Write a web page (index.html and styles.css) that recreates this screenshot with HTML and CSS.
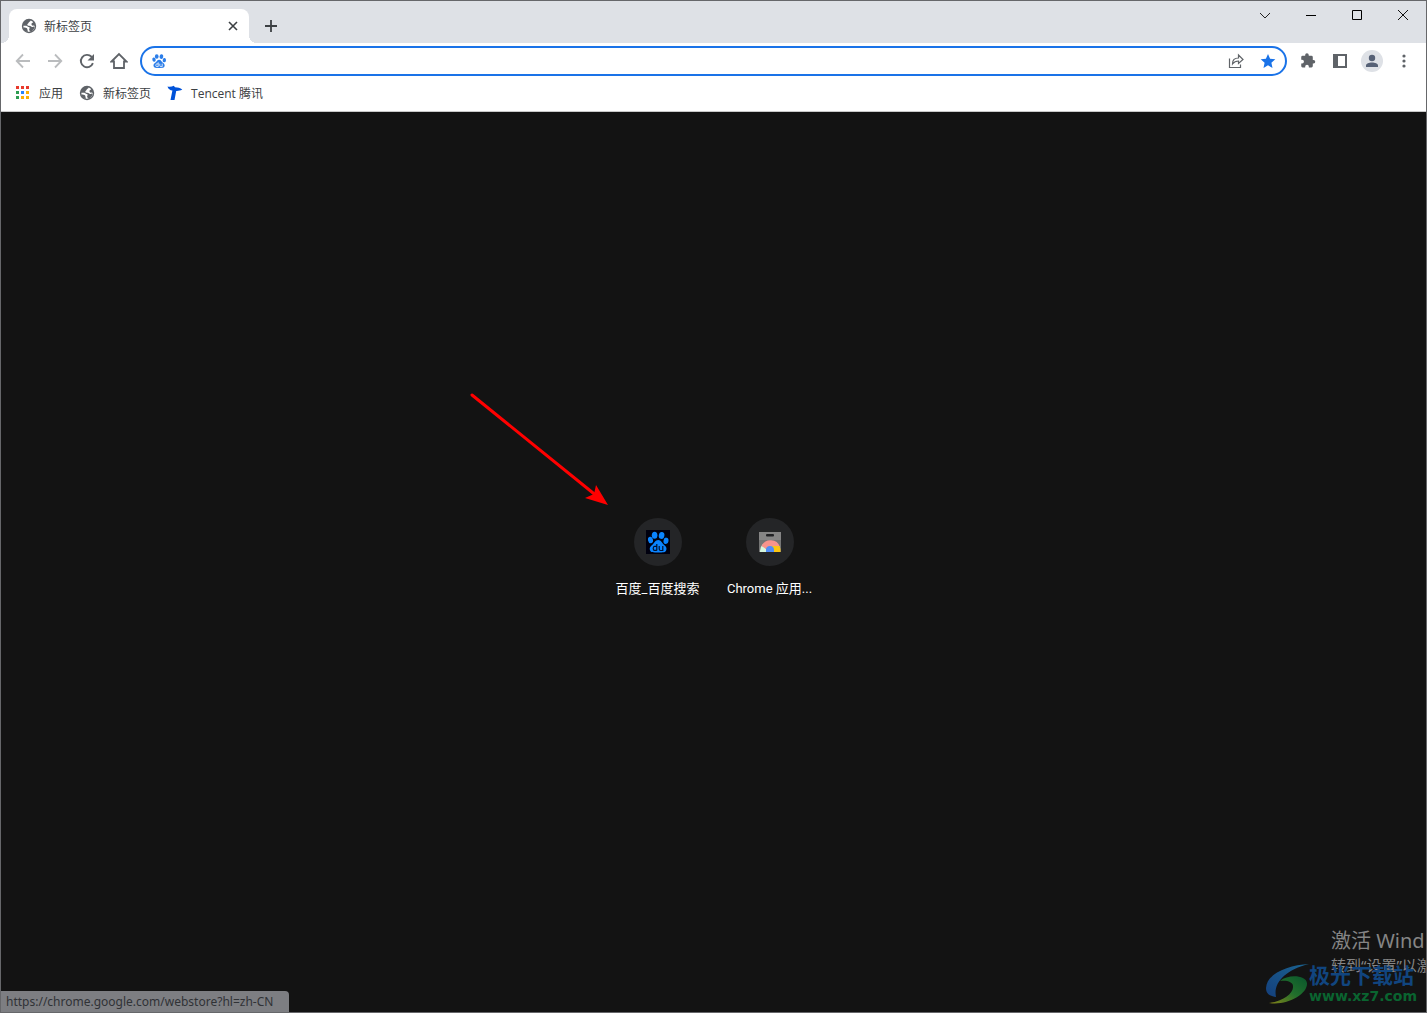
FILE: index.html
```html
<!DOCTYPE html>
<html lang="zh-CN">
<head>
<meta charset="utf-8">
<title>新标签页</title>
<link rel="stylesheet" href="styles.css">
</head>
<body>
<svg class="defs" aria-hidden="true">
  <symbol id="globe" viewBox="0 0 16 16">
    <circle cx="8" cy="8" r="7.200" fill="#5f6368"/>
    <path d="M9.800 2.500c-.6 1.300-2 1.300-2.200 2.300-.2.900-1.300 1-1.300 1.900 0 .8.800 1.100 2 1.100 1.400 0 1.700 1.200 2.900 1.200 1 0 1.300-.8 2.300-.8.200 2.600-1.900 5.200-5 5.500.1-1.100.1-1.700-.5-2.100.1-.9.800-1.100.6-1.900-.3-1-1.500-.6-2.300-1.400C5.500 7.500 4.300 7.800 2.400 7.700c-.2 3.200 2.200 5 4 5.700l2 .5c3 0 5.600-2.600 5.500-5.800-.7-.8-1.700-.9-2.400-.4-.7-.8-1.400-1.500-.9-2.300.6-.7 1.400-.6 1.600-1.400z" fill="#fff"/>
    <path d="M2.400 9.200c1.500.4 3.200.2 3.700 1.300.5.900.3 2.200 1 3.300-2.700-.2-4.800-2.300-4.700-4.600z" fill="#5f6368"/>
  </symbol>
  <symbol id="paw" viewBox="0 0 24 24">
    <ellipse cx="8.600" cy="5.300" rx="2.800" ry="3.500"/>
    <ellipse cx="15.600" cy="5.400" rx="2.800" ry="3.500" transform="rotate(10 15.600 5.400)"/>
    <ellipse cx="4.500" cy="10" rx="2.500" ry="3.200" transform="rotate(-12 4.500 10)"/>
    <ellipse cx="20" cy="10.800" rx="2.500" ry="3.200" transform="rotate(8 20 10.800)"/>
    <path d="M12.200 10c3 0 3.700 3 5.700 4.700 2.300 1.900 3 3 2.400 5.200-.7 2.500-3 2.500-8.100 2.500s-7.600 0-8.300-2.500c-.6-2.200.3-3.500 2.500-5.200 2-1.700 2.800-4.700 5.800-4.700Z"/>
    <path d="M10.800 14v6.500M10.800 16.400H8.600q-1.400 0-1.400 2t1.400 2h2.200M13.200 16v3q0 1.500 1.400 1.500h2.200V16" fill="none" stroke="var(--paw-mark)" stroke-width="1.200"/>
  </symbol>
</svg>
<div class="window">
  <header class="tabstrip">
    <div class="tab">
      <svg class="i16"><use href="#globe"/></svg>
      <span class="tab-title">新标签页</span>
      <button class="tab-close" aria-label="关闭标签页"><svg class="i16" viewBox="0 0 16 16"><path d="M4 4l8 8M12 4l-8 8" stroke="#3c4043" stroke-width="1.600"/></svg></button>
    </div>
    <button class="new-tab" aria-label="新标签页"><svg class="i16" viewBox="0 0 16 16"><path d="M8 2v12M2 8h12" stroke="#3c4043" stroke-width="1.800"/></svg></button>
    <div class="caption">
      <button aria-label="搜索标签页"><svg class="i16" viewBox="0 0 16 16"><path d="M3 6l5 5 5-5" stroke="#222"/></svg></button>
      <button aria-label="最小化"><svg class="i16" viewBox="0 0 16 16"><path d="M3 8.500h10" stroke="#000"/></svg></button>
      <button aria-label="最大化"><svg class="i16" viewBox="0 0 16 16"><path d="M3.500 3.500h9v9h-9z" stroke="#000"/></svg></button>
      <button aria-label="关闭"><svg class="i16" viewBox="0 0 16 16"><path d="M3 3l10 10M13 3L3 13" stroke="#111"/></svg></button>
    </div>
  </header>
  <nav class="toolbar">
    <button aria-label="后退"><svg class="i16" viewBox="0 0 16 16"><path d="M15 8H2M8 1.500L1.700 8 8 14.500" stroke="#babcbe" stroke-width="1.800"/></svg></button>
    <button aria-label="前进"><svg class="i16" viewBox="0 0 16 16"><path d="M1 8h13M8 1.500L14.300 8 8 14.500" stroke="#babcbe" stroke-width="1.800"/></svg></button>
    <button aria-label="重新加载"><svg class="i16" viewBox="0 0 16 16"><path d="M13.900 10.200A6.200 6.200 0 1 1 12.500 3.700L14 5.400" stroke="#5f6368" stroke-width="1.900"/><path d="M15 1v6.500H8.500z" fill="#5f6368"/></svg></button>
    <button aria-label="主页"><svg class="i18" viewBox="0 0 18 18"><path d="M1.500 9.500L9 2l7.500 7.500H14V16H4V9.500z" stroke="#5f6368" stroke-width="1.800"/></svg></button>
    <div class="omnibox">
      <svg class="i16 paw-blue"><use href="#paw"/></svg>
      <input type="text" aria-label="地址栏">
      <button aria-label="分享"><svg class="i16" viewBox="0 0 16 16"><path d="M1.500 5.500v9h11v-3M4.500 11c0-4 2-6 6-6V2l4.500 4.500-4.500 4V8c-3 0-4.500 1-6 3z" stroke="#606468" stroke-width="1.200"/></svg></button>
      <button aria-label="书签"><svg class="i16" viewBox="0 0 16 16"><path d="M8 1l2.100 4.800 5.200.5-3.900 3.500 1.100 5.200L8 12.300 3.500 15l1.100-5.200L.7 6.300l5.200-.5z" fill="#1a73e8"/></svg></button>
    </div>
    <button aria-label="扩展程序"><svg class="i16" viewBox="-1 0 26 26"><path d="M21 11.500h-1.200V6.800a2.200 2.200 0 0 0-2.200-2.200h-4.400V3.400a2.900 2.900 0 0 0-5.800 0v1.200H3.200A2.200 2.200 0 0 0 1 6.800V11h1.400a3 3 0 0 1 0 6H1v4.300a2.200 2.200 0 0 0 2.200 2.200h4.200v-1.300a3 3 0 0 1 6 0v1.300h4.200a2.200 2.200 0 0 0 2.200-2.200v-4.200H21a2.800 2.800 0 0 0 0-5.600z" fill="#5f6368"/></svg></button>
    <button aria-label="侧边栏"><svg class="i16" viewBox="0 0 16 16"><path fill-rule="evenodd" d="M1 1h14v14H1zM6 3v10h7V3z" fill="#5f6368"/></svg></button>
    <button class="profile" aria-label="个人资料"><svg class="i16" viewBox="0 0 16 16"><circle cx="8" cy="5" r="3.200" fill="#566176"/><path d="M2 14v-1.500C2 10.500 5 9.500 8 9.500s6 1 6 3V14z" fill="#566176"/></svg></button>
    <button aria-label="更多"><svg class="i16" viewBox="0 0 16 16"><g fill="#5f6368"><circle cx="8" cy="3" r="1.600"/><circle cx="8" cy="8" r="1.600"/><circle cx="8" cy="13" r="1.600"/></g></svg></button>
  </nav>
  <nav class="bookmarks">
    <a href="#apps"><svg class="i16" viewBox="0 0 16 16"><path d="M1 1h3v3H1zM6 1h3v3H6zM11 1h3v3h-3z" fill="#e8392c"/><path d="M1 6h3v3H1zM1 11h3v3H1z" fill="#2e9c52"/><path d="M6 6h3v3H6z" fill="#2684fc"/><path d="M11 6h3v3h-3zM6 11h3v3H6zM11 11h3v3h-3z" fill="#fbaf05"/></svg><span>应用</span></a>
    <a href="#newtab"><svg class="i16"><use href="#globe"/></svg><span>新标签页</span></a>
    <a href="#tencent"><svg class="i16" viewBox="0 0 16 16"><path d="M.5 1.500c2.300.6 4.300.3 6.300-.8l1.200 1.500c2.800 0 5.200.8 7.300 2.400-2 1.100-3.900 1.500-6.100 1.400L7.500 15H3.500L5.400 5.500C3 5.300 1.200 4 .5 1.500z" fill="#0052d9"/></svg><span>Tencent 腾讯</span></a>
  </nav>
  <main class="content">
    <div class="shortcuts">
      <a class="tile" href="#baidu"><span class="disc"><span class="favicon"><svg class="i24 paw-dark"><use href="#paw"/></svg></span></span><span class="label">百度_百度搜索</span></a>
      <a class="tile" href="#webstore"><span class="disc"><svg class="i24" viewBox="0 0 24 24"><path d="M1 2h22v20H1z" fill="#757575"/><path d="M1 2h22v8H1z" fill="#858585"/><rect x="8" y="4" width="8" height="2.500" rx="1" fill="#202124"/><path d="M2 22a10 10 0 0 1 3-8l5 8z" fill="#d5f6dd"/><path d="M3.500 16a10 10 0 0 1 18.500 1l-10 1-4 1z" fill="#f8938c"/><path d="M14 16h7.500a11 11 0 0 1 1 6H13z" fill="#fbc611"/><path d="M8 22v-2a4 4 0 0 1 8 0v2z" fill="#508df5"/></svg></span><span class="label">Chrome 应用...</span></a>
    </div>
    <svg class="arrow" viewBox="0 0 140 116"><path d="M2 2L128 104" stroke="#f00" stroke-width="3" stroke-linecap="round"/><path d="M138 112l-12-20-2 9-9 4z" fill="#f00"/></svg>
    <div class="activation"><div class="activation-title">激活 Wind</div><div class="activation-note">转到“设置”以激</div></div>
    <div class="sitemark">
      <svg class="swirl" viewBox="0 0 44 44"><defs><linearGradient id="blue" x1="0" y1="1" x2="1" y2="0"><stop offset="0" stop-color="#143f7c"/><stop offset="1" stop-color="#1b6491"/></linearGradient><linearGradient id="green" x1="0" y1="1" x2="1" y2="0"><stop offset="0" stop-color="#858318"/><stop offset=".5" stop-color="#226f2c"/><stop offset="1" stop-color="#09552c"/></linearGradient></defs><path d="M44 1C24 2 2 10 1 25c0 6 4 8 10 9-3-14 9-27 33-33z" fill="url(#blue)"/><path d="M15 18c8-7 26-6 27 2 1 11-20 23-38 20 14-2 25-10 24-17 0-4-6-6-13-5z" fill="url(#green)"/></svg>
      <div><div class="site-name">极光下载站</div><div class="site-url">www.xz7.com</div></div>
    </div>
    <div class="status">https://chrome.google.com/webstore?hl=zh-CN</div>
  </main>
</div>
</body>
</html>
```
FILE: styles.css
```css
* { box-sizing: border-box; }
body {
  margin: 0;
  font-family: "Open Sans", "Noto Sans CJK SC", sans-serif;
  font-size: 12px;
  line-height: 16px;
  color: #3c4043;
}
button {
  display: flex;
  align-items: center;
  justify-content: center;
  padding: 0;
  border: 0;
  background: none;
}
a { color: inherit; text-decoration: none; }
svg { flex: none; fill: none; }
.defs { position: absolute; width: 0; height: 0; }
.i16 { width: 16px; height: 16px; }
.i18 { width: 18px; height: 18px; }
.i24 { width: 24px; height: 24px; }
.window {
  display: flex;
  flex-direction: column;
  min-height: 100vh;
  border: 1px solid #66676a;
  background: #fff;
}
.tabstrip {
  display: flex;
  height: 42px;
  padding-left: 8px;
  background: #dee1e6;
}
.tab {
  position: relative;
  display: flex;
  align-items: center;
  gap: 7px;
  width: 240px;
  margin-top: 8px;
  padding: 0 8px 0 12px;
  border-radius: 8px 8px 0 0;
  background: #fff;
}
.tab::before, .tab::after {
  content: "";
  position: absolute;
  bottom: 0;
  width: 8px;
  height: 8px;
}
.tab::before { right: 100%; background: radial-gradient(circle at 0 0, #dee1e6 8px, #fff 8px); }
.tab::after { left: 100%; background: radial-gradient(circle at 100% 0, #dee1e6 8px, #fff 8px); }
.tab-title { flex: 1; }
.tab-title, .bookmarks span { padding-top: 2px; }
.new-tab { width: 28px; height: 28px; margin: 11px 0 0 8px; }
.caption { display: flex; margin-left: auto; }
.caption button { width: 46px; height: 28px; }
.toolbar {
  display: flex;
  align-items: center;
  height: 36px;
  padding: 0 6px;
}
.toolbar > button { width: 32px; height: 32px; }
.omnibox {
  display: flex;
  flex: 1;
  align-items: center;
  height: 30px;
  margin: 0 5px;
  padding: 0 1px 0 9px;
  border: 2px solid #1a73e8;
  border-radius: 15px;
}
.omnibox input {
  flex: 1;
  min-width: 0;
  border: 0;
  outline: 0;
  background: none;
  font: inherit;
}
.omnibox button { width: 32px; height: 24px; }
.toolbar > .profile { width: 22px; height: 22px; margin: 0 5px; border-radius: 50%; background: #dee1e6; }
.paw-blue { fill: #2b7de9; --paw-mark: #fff; }
.paw-dark { fill: #0a84ff; --paw-mark: #00102c; }
.bookmarks {
  display: flex;
  align-items: center;
  gap: 16px;
  height: 33px;
  padding: 0 14px 4px;
  border-bottom: 1px solid #c8c8c8;
}
.bookmarks a { display: flex; align-items: center; gap: 8px; }
.content {
  position: relative;
  flex: 1;
  overflow: hidden;
  padding-top: 406px;
  background: #131313;
}
.shortcuts { display: flex; justify-content: center; }
.tile {
  display: flex;
  flex-direction: column;
  align-items: center;
  gap: 15px;
  width: 112px;
  color: #fff;
  font: 400 13px/16px Roboto, "Noto Sans CJK SC", sans-serif;
}
.disc {
  display: flex;
  align-items: center;
  justify-content: center;
  width: 48px;
  height: 48px;
  border-radius: 50%;
  background: #242527;
}
.favicon { display: flex; background: #00000f; }
.label { white-space: nowrap; }
.arrow { position: absolute; left: calc(50% - 244px); top: 281px; width: 140px; height: 116px; }
.activation {
  position: absolute;
  right: 0;
  bottom: 36px;
  width: 95px;
  color: #858585;
  font-family: "Noto Sans", "Noto Sans CJK SC", sans-serif;
  white-space: nowrap;
}
.activation-title { font-size: 20px; line-height: 26px; }
.activation-note { font-size: 15px; line-height: 22px; }
.sitemark {
  position: absolute;
  right: 9px;
  bottom: 5px;
  display: flex;
  white-space: nowrap;
}
.swirl { width: 44px; height: 44px; }
.site-name { color: #11457f; font-size: 21px; line-height: 24px; font-weight: 700; }
.site-url { color: #0a6430; font: 700 14px/18px "DejaVu Sans", sans-serif; }
.status {
  position: absolute;
  left: 0;
  bottom: 0;
  min-width: 288px;
  height: 21px;
  padding: 0 6px 0 5px;
  border-radius: 0 4px 0 0;
  background: #7d7e82;
  color: #303236;
  font-family: "Noto Sans", sans-serif;
  line-height: 21px;
}
```
